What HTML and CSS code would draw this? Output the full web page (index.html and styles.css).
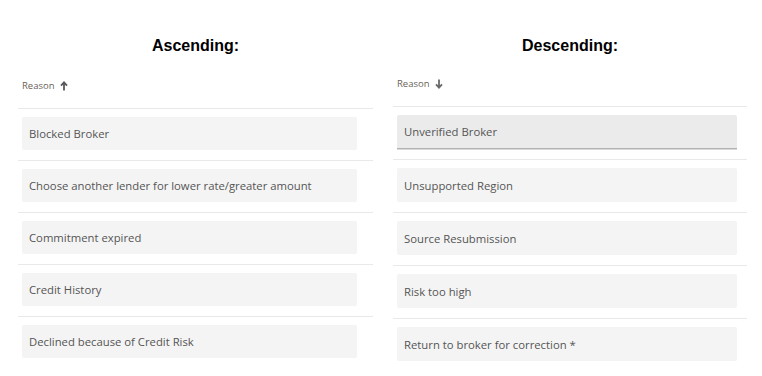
FILE: index.html
```html
<!DOCTYPE html>
<html>
<head>
<meta charset="utf-8">
<link rel="stylesheet" href="styles.css">
</head>
<body>
<div class="page">
  <section class="col col-asc">
    <h2 class="title">Ascending:</h2>
    <div class="sort-head">
      <span class="label">Reason</span>
      <svg class="arrow" width="8" height="10" viewBox="0 0 8 10"><path d="M4 9.5V2M1 4.6L4 1.4L7 4.6" fill="none" stroke="#5a5a5a" stroke-width="1.8"/></svg>
    </div>
    <ul class="list">
      <li class="row"><div class="item">Blocked Broker</div></li>
      <li class="row"><div class="item">Choose another lender for lower rate/greater amount</div></li>
      <li class="row"><div class="item">Commitment expired</div></li>
      <li class="row"><div class="item">Credit History</div></li>
      <li class="row last"><div class="item">Declined because of Credit Risk</div></li>
    </ul>
  </section>
  <section class="col col-desc">
    <h2 class="title">Descending:</h2>
    <div class="sort-head">
      <span class="label">Reason</span>
      <svg class="arrow" width="8" height="10" viewBox="0 0 8 10"><path d="M4 0.5V8M1 5.4L4 8.6L7 5.4" fill="none" stroke="#6a6a6a" stroke-width="1.8"/></svg>
    </div>
    <ul class="list">
      <li class="row"><div class="item active">Unverified Broker</div></li>
      <li class="row"><div class="item">Unsupported Region</div></li>
      <li class="row"><div class="item">Source Resubmission</div></li>
      <li class="row"><div class="item">Risk too high</div></li>
      <li class="row last"><div class="item">Return to broker for correction *</div></li>
    </ul>
  </section>
</div>
</body>
</html>
```
FILE: styles.css
```css
html, body {
  margin: 0;
  padding: 0;
  background: #ffffff;
}
.page {
  display: flex;
  padding: 36px 0 0 18px;
  gap: 20px;
}
.col {
  display: flex;
  flex-direction: column;
}
.col-asc { width: 355px; }
.col-desc { width: 354px; }
.title {
  margin: 0;
  font-family: "Liberation Sans", Arial, sans-serif;
  font-weight: bold;
  font-size: 16px;
  line-height: 20px;
  color: #000;
  text-align: center;
}
.sort-head {
  display: flex;
  align-items: flex-start;
  gap: 5px;
  padding-left: 4px;
  height: 29px;
  border-bottom: 1px solid #e9e9e9;
  font-family: "Open Sans", sans-serif;
  font-size: 9.5px;
  color: #6b5f57;
}
.col-asc .sort-head { margin-top: 23px; }
.col-desc .sort-head { margin-top: 21px; }
.sort-head .label { line-height: 14px; }
.sort-head .arrow { margin-top: 2px; }
.list {
  list-style: none;
  margin: 0;
  padding: 0;
}
.row {
  padding: 8px 16px 10px 4px;
  border-bottom: 1px solid #e9e9e9;
}
.col-desc .row { padding-right: 10px; }
.row.last { border-bottom: none; }
.item {
  box-sizing: border-box;
  height: 33px;
  display: flex;
  align-items: center;
  padding-left: 7px;
  background: #f4f4f4;
  border-radius: 2px;
  font-family: "Open Sans", sans-serif;
  font-size: 11.3px;
  color: #555555;
}
.col-desc .item { height: 34px; }
.item.active {
  background: #ebebeb;
  border-bottom: 1px solid #b3b3b3;
  box-shadow: 0 1px 0 #dadada;
  border-radius: 2px 2px 0 0;
}
```
